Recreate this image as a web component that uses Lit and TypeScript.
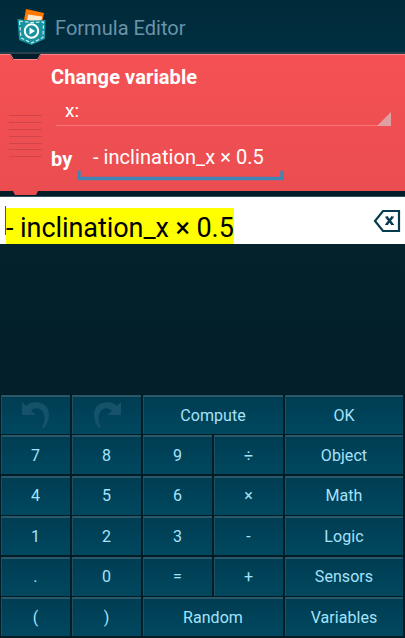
import { LitElement, html, css, svg } from "lit";
import { customElement } from "lit/decorators.js";

type Key = { label: string; wide?: boolean; icon?: "undo" | "redo" };

const KEYS: Key[] = [
  { label: "Undo", icon: "undo" }, { label: "Redo", icon: "redo" }, { label: "Compute", wide: true }, { label: "OK" },
  { label: "7" }, { label: "8" }, { label: "9" }, { label: "÷" }, { label: "Object" },
  { label: "4" }, { label: "5" }, { label: "6" }, { label: "×" }, { label: "Math" },
  { label: "1" }, { label: "2" }, { label: "3" }, { label: "-" }, { label: "Logic" },
  { label: "." }, { label: "0" }, { label: "=" }, { label: "+" }, { label: "Sensors" },
  { label: "(" }, { label: ")" }, { label: "Random", wide: true }, { label: "Variables" },
];

const arrow = svg`<path d="M0 1 L4 5 C9 -1 26 -1 27 13 C27 19 25 23 22 27 L20 26 C23 21 23 18 22 14 C20 6 12 6 9 10 L14 14 L0 14 Z"/>`;

@customElement("formula-keypad")
class FormulaKeypad extends LitElement {
  static styles = css`
    :host { display: block; background: #021c26; }
    .grid {
      display: grid;
      grid-template-columns: 69px 69px 69px 69px 118px;
      grid-template-rows: repeat(6, 39px);
      column-gap: 2px;
      row-gap: 1.4px;
      padding: 1px 0 2px 1px;
    }
    .key {
      box-sizing: border-box;
      display: flex;
      align-items: center;
      justify-content: center;
      padding: 0 1px 1px 0;
      border: 0 solid #29586a;
      border-top-width: 2px;
      border-left: 1px solid #1c5164;
      background: linear-gradient(#003d53, #00485f);
      color: #a5e2fb;
      font: 16px Roboto, sans-serif;
      letter-spacing: 0.06px;
    }
    .wide { grid-column: span 2; }
    svg { width: 28px; height: 28px; fill: #16536a; }
    .redo { transform: scaleX(-1); }
  `;
  render() {
    return html`<div class="grid">
      ${KEYS.map((k) => html`<button class="key ${k.wide ? "wide" : ""}" aria-label=${k.label}>
        ${k.icon ? html`<svg class=${k.icon} viewBox="0 0 28 28">${arrow}</svg>` : k.label}
      </button>`)}
    </div>`;
  }
}

@customElement("app-root")
class AppRoot extends LitElement {
  static styles = css`
    :host {
      display: flex;
      flex-direction: column;
      height: 638px;
      background: #03212b;
      font-family: Roboto, sans-serif;
      overflow: hidden;
    }
    .bar {
      box-sizing: border-box;
      height: 52px;
      flex: none;
      display: flex;
      align-items: center;
      gap: 8px;
      padding: 0 0 0 16px;
      background: linear-gradient(#002a39, #002f41);
    }
    .bar svg { width: 31px; height: 40px; }
    .title { color: #6b93a9; font-size: 20px; letter-spacing: 0.03px; padding-top: 4px; line-height: 24px; }
    .brick { position: relative; height: 145px; flex: none; box-sizing: border-box; padding: 13px 14px 0 51px; color: #fff; }
    .shape { position: absolute; inset: 0; width: 405px; height: 145px; }
    .content { position: relative; }
    .name { font-weight: 700; font-size: 20px; line-height: 24px; letter-spacing: 0.1px; }
    .spinner {
      box-sizing: border-box;
      display: flex;
      justify-content: space-between;
      align-items: flex-end;
      height: 37px;
      margin-left: 5px;
      padding-left: 9px;
      border-bottom: 1px solid #f87376;
      font-size: 19px;
    }
    .spinner span { line-height: 22px; padding-bottom: 3px; }
    .spinner svg { width: 14px; height: 14px; fill: #e0a0a2; margin-bottom: -1px; }
    .row { display: flex; align-items: flex-end; margin-top: 15px; gap: 5px; }
    .by { font-weight: 700; font-size: 20px; line-height: 24px; padding-bottom: 10px; letter-spacing: 0.1px; }
    .field { position: relative; box-sizing: border-box; width: 207px; height: 40px; padding-left: 15.5px; font-size: 20px; line-height: 32px; letter-spacing: 0.06px; white-space: nowrap; }
    .field svg { position: absolute; left: 0; bottom: 0; width: 207px; height: 12px; }
    .editor { display: flex; height: 47px; flex: none; box-sizing: border-box; background: #fff; padding: 11px 4px 0 6px; justify-content: space-between; align-items: flex-start; }
    .formula { position: relative; background: #ff0; color: #000; font-size: 27px; line-height: 40px; height: 36px; letter-spacing: -0.06px; white-space: nowrap; }
    .caret { position: absolute; left: -1px; top: -2px; width: 1px; height: 29px; background: #555; }
    .del { width: 28px; height: 24px; margin-top: 1px; }
    .space { flex: 1; background: linear-gradient(#03222c, #031f29); }
  `;
  render() {
    return html`
      <header class="bar">
        <svg viewBox="0 0 31 40">
          <path d="M10 3 L28 7 L26 17 L8 14Z" fill="#ff7800"/>
          <path d="M12 8.500 L26 10.500 L25 17 L11 15Z" fill="#ffe8cf"/>
          <path d="M1.500 13 L15 14.500 L29.500 14 L29 33 L15.500 39 L3 34Z" fill="#18929f"/>
          <path d="M3.500 15 L15 16.500 L27.500 16 L27 31.500 L15.500 37 L5 32Z" fill="none" stroke="#d5f3f3" stroke-width="1.100" stroke-dasharray="3.500 2"/>
          <circle cx="15.500" cy="25" r="6.700" fill="#18929f" stroke="#fff" stroke-width="2"/>
          <path d="M13.500 21.500 L19 25 L13.500 28.500Z" fill="#fff"/>
        </svg>
        <span class="title">Formula Editor</span>
      </header>
      <section class="brick">
        <svg class="shape" viewBox="0 0 405 145">
          <defs><linearGradient id="red" x2="0" y2="1"><stop stop-color="#f55154"/><stop offset="1" stop-color="#ea4d50"/></linearGradient></defs>
          <rect width="405" height="145" fill="#031e28"/>
          <rect width="405" height="2" fill="#26404c"/>
          <path d="M0 2.500 H10 L13 8 H38 L41 2.500 H405 V139 H38 L36 143 H15 L13 139 H0Z" fill="url(#red)"/>
          <path d="M0 2.500 H10.500 L13.500 7.500 H37.500 L40.500 2.500 H405" fill="none" stroke="#ff8385"/>
          <path d="M11.500 2 H39.500 L37 7 H14Z" fill="#031e28"/>
          <path d="M9 63.500H42M9 70.500H42M9 77.500H42M9 84.500H42M9 91.500H42M9 97.500H42M9 104.500H42" stroke="#cf454a" stroke-width="1"/>
          <path d="M0 144.500H405" stroke="#34505a"/>
        </svg>
        <div class="content">
          <div class="name">Change variable</div>
          <div class="spinner"><span>x:</span><svg viewBox="0 0 14 14"><path d="M14 0V14H0Z"/></svg></div>
          <div class="row">
            <span class="by">by</span>
            <div class="field">- inclination_x × 0.5
              <svg viewBox="0 0 207 12"><path d="M2 1.500V9.500H205V1.500" fill="none" stroke="#b0607d" stroke-width="4"/><path d="M2 2V9.500H205V2" fill="none" stroke="#3f86b5" stroke-width="3"/></svg>
            </div>
          </div>
        </div>
      </section>
      <section class="editor">
        <div class="formula"><i class="caret"></i>- inclination_x × 0.5</div>
        <svg class="del" viewBox="0 0 28 24">
          <path d="M10 2 H26 V22 H10 L2 12Z" fill="none" stroke="#063b4f" stroke-width="2.200"/>
          <path d="M13.500 8 L19.500 15.500 M19.500 8 L13.500 15.500" stroke="#063b4f" stroke-width="2.500"/>
          <path d="M12.200 8H15.200M18 8H21M12.200 15.500H15.200M18 15.500H21" stroke="#063b4f" stroke-width="1"/>
        </svg>
      </section>
      <div class="space"></div>
      <formula-keypad></formula-keypad>
    `;
  }
}
